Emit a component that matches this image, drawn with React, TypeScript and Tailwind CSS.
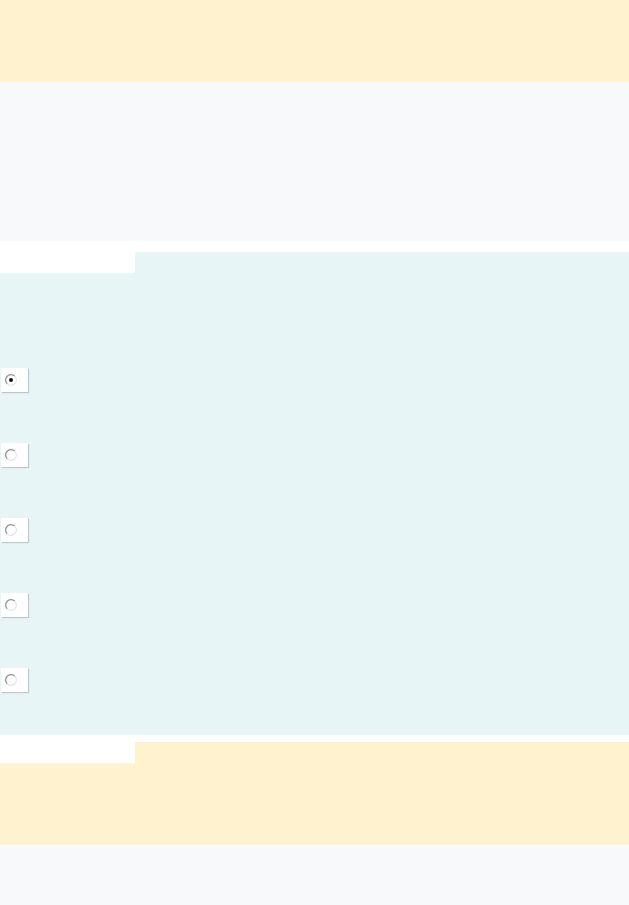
import React from "react"

const Radio = ({checked}: {checked?: boolean}) => (
    <div className="ml-[1px] flex h-[24px] w-[27px] items-center bg-white pl-[4px] shadow-[1px_1px_1px_rgba(0,0,0,0.18)]">
        <svg width="12" height="12" viewBox="0 0 12 12">
            <path d="M2.2 9.8 A5 5 0 0 1 9.8 2.2" fill="none" stroke="#8a8a8a" strokeWidth="1.2"/>
            <path d="M9.8 2.2 A5 5 0 0 1 2.2 9.8" fill="none" stroke="#e4e4e4" strokeWidth="1.2"/>
            {checked && <circle cx="6" cy="6" r="2" fill="#111"/>}
        </svg>
    </div>
)

const TabGap = ({color, top, height}: {color: string, top: string, height: string}) => (
    <div className={`flex w-full ${height}`}>
        <div className="w-[135px] bg-white"/>
        <div className="flex flex-1 flex-col">
            <div className={`bg-white ${top}`}/>
            <div className={`flex-1 ${color}`}/>
        </div>
    </div>
)

export default function App() {
    return (
        <div className="flex min-h-[905px] w-full flex-col bg-white">
            <div className="h-[82px] bg-[#fff3cf]"/>
            <div className="h-[159px] bg-[#f8f9fa]"/>
            <TabGap color="bg-[#e7f5f6]" top="h-[11px]" height="h-[32px]"/>
            <div className="flex h-[462px] flex-col gap-[51px] bg-[#e7f5f6] pt-[95px]">
                <Radio checked/>
                <Radio/>
                <Radio/>
                <Radio/>
                <Radio/>
            </div>
            <TabGap color="bg-[#fff3cf]" top="h-[7px]" height="h-[28px]"/>
            <div className="h-[82px] bg-[#fff3cf]"/>
            <div className="flex-1 bg-[#f8f9fa]"/>
        </div>
    )
}
